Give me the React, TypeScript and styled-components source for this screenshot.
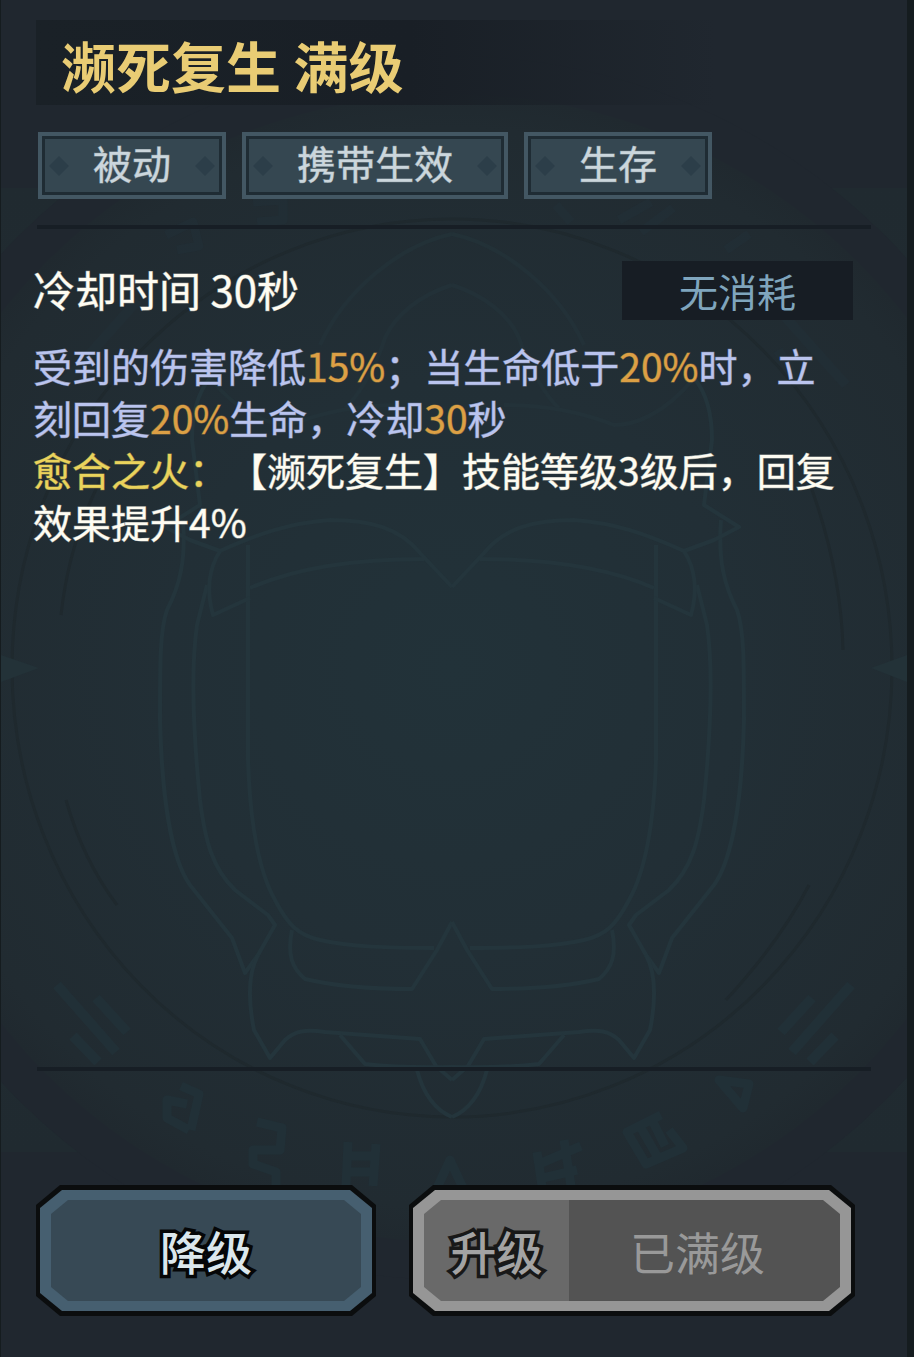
import React from "react";
import styled, { createGlobalStyle } from "styled-components";

const GlobalStyle = createGlobalStyle`
  * { box-sizing: border-box; }
  body {
    margin: 0;
    background: #151c1f;
    font-family: "Noto Sans CJK SC", "Noto Sans", sans-serif;
    text-spacing-trim: space-all;
  }
  button { font-family: inherit; }
`;

const softStroke = "1px color-mix(in srgb, currentColor 50%, transparent)";

const Panel = styled.main`
  position: relative;
  isolation: isolate;
  display: flex;
  flex-direction: column;
  min-height: 100vh;
  margin: 0 7px 0 1px;
  padding: 20px 0 41px;
  background: #20272f;
`;

const Backdrop = styled.svg`
  position: absolute;
  inset: 0;
  z-index: -1;
  width: 100%;
  height: 100%;
`;

const TitleBar = styled.header`
  margin: 0 190px 0 35px;
  padding: 3px 0 0 25px;
  background: linear-gradient(90deg, #1a2127 0%, #191f26 55%, rgba(27, 32, 40, 0) 100%);
`;

const Title = styled.h1`
  margin: 0;
  color: #e9cc74;
  font-size: 55px;
  font-weight: 700;
  line-height: 82px;
  white-space: nowrap;
`;

const TagList = styled.ul`
  display: flex;
  gap: 16px;
  margin: 27px 0 26px;
  padding: 0 37px;
  list-style: none;
`;

const Tag = styled.li`
  display: flex;
  align-items: center;
  gap: 27px;
  height: 67px;
  padding: 0 10px;
  border: 4px solid #435763;
  background: #354751;
  box-shadow: inset 0 0 0 3px #1f2c34;
  color: #cbd6dc;
  font-size: 39px;
  line-height: 55px;
  -webkit-text-stroke: ${softStroke};
  white-space: nowrap;

  &::before,
  &::after {
    content: "";
    flex: none;
    width: 14px;
    height: 14px;
    background: #2c3e49;
    transform: rotate(45deg);
  }
`;

const TagText = styled.span`
  padding-bottom: 7px;
`;

const Divider = styled.hr`
  width: auto;
  height: 4px;
  margin: 0 36px;
  border: 0;
  background: #171e25;
`;

const Details = styled.section`
  flex: 1;
  padding: 32px 54px 32px 32px;
`;

const StatRow = styled.div`
  display: flex;
  align-items: flex-start;
  justify-content: space-between;
`;

const Cooldown = styled.p`
  margin: 0;
  color: #fefcf2;
  font-size: 42px;
  line-height: 56px;
  -webkit-text-stroke: ${softStroke};
`;

const Cost = styled.p`
  width: 231px;
  margin: 0;
  background: #171d24;
  color: #7fa5bd;
  font-size: 39px;
  line-height: 59px;
  text-align: center;
`;

const Description = styled.p`
  margin: 19px 0 0;
  color: #bac4ee;
  font-size: 39px;
  line-height: 52px;
  -webkit-text-stroke: ${softStroke};
`;

type Tone = "value" | "name" | "note";
const tones: Record<Tone, string> = {
  value: "#dca045",
  name: "#ead35c",
  note: "#fefcf2",
};

const Mark = styled.span<{ $tone: Tone }>`
  color: ${(p) => tones[p.$tone]};
  -webkit-text-stroke: ${softStroke};
`;

const Actions = styled.footer`
  display: grid;
  grid-template-columns: 340fr 446fr;
  gap: 33px;
  margin-top: 114px;
  padding: 0 52px 0 35px;
`;

const cut = (x: number, y: number) =>
  `polygon(${x}px 0, calc(100% - ${x}px) 0, 100% ${y}px, 100% calc(100% - ${y}px), calc(100% - ${x}px) 100%, ${x}px 100%, 0 calc(100% - ${y}px), 0 ${y}px)`;

const ActionButton = styled.button`
  display: block;
  height: 131px;
  padding: 5px 4px;
  border: 0;
  background: #0b0d0e;
  clip-path: ${cut(24, 20)};
  font-size: 46px;
`;

const Rim = styled.span<{ $color: string }>`
  display: block;
  height: 100%;
  padding: 10px 11px;
  background: ${(p) => p.$color};
  clip-path: ${cut(22, 18)};
`;

const Face = styled.span`
  display: flex;
  height: 100%;
  clip-path: ${cut(17, 14)};
`;

const FacePart = styled.span<{ $color: string }>`
  display: flex;
  flex: 1;
  align-items: center;
  justify-content: center;
  background: ${(p) => p.$color};
`;

const FaceTag = styled(FacePart)`
  flex: 0 0 145px;
`;

const Outlined = styled.span<{ $color: string; $edge: string }>`
  padding-bottom: 2px;
  color: ${(p) => p.$color};
  font-weight: 500;
  -webkit-text-stroke: 7px ${(p) => p.$edge};
  paint-order: stroke fill;
  stroke-linejoin: round;
`;

const Status = styled.span`
  padding: 2px 14px 0 0;
  color: #999999;
  font-size: 45px;
`;

function Emblem() {
  return (
    <Backdrop viewBox="0 0 906 1357" preserveAspectRatio="xMidYMid slice" aria-hidden="true">
      <defs>
        <linearGradient id="band" x1="0" y1="0" x2="0" y2="1">
          <stop offset="0" stopColor="#202a30" />
          <stop offset="0.5" stopColor="#212d32" />
          <stop offset="1" stopColor="#202a30" />
        </linearGradient>
        <radialGradient id="disc">
          <stop offset="0" stopColor="#223239" />
          <stop offset="0.5" stopColor="#222f36" />
          <stop offset="0.94" stopColor="#212b31" />
          <stop offset="1" stopColor="#20292f" />
        </radialGradient>
        <g id="half" fill="none" stroke="#24353c" strokeWidth="4" strokeLinejoin="round">
          <path d="M183 520C186 560 180 585 167 610C160 630 160 660 160 720C162 800 172 860 190 885L232 938L245 973L258 955L275 925L268 915L235 890C212 868 205 840 200 800C192 720 192 660 197 625L207 585" />
          <path d="M248 545V760C250 820 258 870 275 900C288 925 298 935 320 940C350 947 390 948 434 948" />
          <path d="M452 922L437 950L412 989C370 989 330 985 305 979C292 968 287 955 292 930" />
          <path d="M452 587L420 553C400 528 370 520 330 520C290 523 260 533 220 551L190 540L165 527L200 505L192 440C192 410 200 390 210 378" />
          <path d="M250 588C300 566 360 559 424 559" />
          <path d="M220 551C208 570 206 590 213 615L250 598" />
          <path d="M258 955C250 970 247 995 254 1030L270 1058L285 1040C295 1031 305 1029 325 1032L420 1039L436 1066L452 1080" />
          <path d="M340 1035L365 1064Q400 1068 452 1067" />
          <path d="M417 1070C425 1100 440 1112 452 1117" />
          <g opacity="0.5">
            <path d="M452 234C400 245 345 290 320 345M452 285C420 295 395 315 385 338C375 370 355 400 345 408" />
            <path d="M210 378C240 415 270 425 290 425C320 413 355 405 400 405" />
          </g>
        </g>
        <g id="ticks" fill="none" stroke="#213037" strokeWidth="10">
          <path d="M57 985L116 1052M96 998L127 1032M73 1036L98 1062" />
          <path d="M62 385L138 300M110 385L130 350" opacity="0.5" />
        </g>
      </defs>
      <rect y="188" width="906" height="964" fill="url(#band)" />
      <circle cx="451" cy="668" r="612" fill="#20272f" />
      <circle cx="451" cy="668" r="574" fill="url(#disc)" />
      <g fill="none" stroke="#1f292e" strokeWidth="3">
        <ellipse cx="451" cy="668" rx="440" ry="449" />
        <path d="M60 615A395 400 0 0 1 110 460M65 800Q82 860 116 905M842 650Q840 560 800 460M725 1000Q780 940 808 885" />
      </g>
      <path d="M0 655L38 668L0 682ZM906 655L870 668L906 682Z" fill="#233238" />
      <g transform="translate(-1 0)">
        <use href="#half" />
        <use href="#half" transform="translate(904 0) scale(-1 1)" />
        <use href="#ticks" />
        <use href="#ticks" transform="translate(908 0) scale(-1 1)" />
      </g>
      <g fill="none" stroke="#213037" strokeWidth="9" strokeLinejoin="round">
        <path d="M180 1086L198 1094L190 1130M186 1104L166 1100V1118L188 1130" />
        <path d="M256 1122L281 1128L279 1150H252V1164L275 1172V1188" />
        <path d="M347 1142L345 1186M375 1144L372 1186M347 1156H374M346 1172H373" />
        <path d="M436 1188L449 1160L462 1188" />
        <path d="M536 1152L541 1186M563 1140L570 1186M538 1164L580 1146M542 1178L576 1170" />
        <path d="M660 1115L626 1132L645 1164L682 1148L668 1130M640 1128L656 1156M652 1122L664 1146" />
        <path d="M718 1080L748 1084L742 1108Z" />
        <g opacity="0.5">
          <path d="M165 235L192 222L198 246L176 250M252 202L282 200V220L256 222" />
          <path d="M555 205L570 222M618 220L650 202M640 232L672 208M725 250L748 234" />
        </g>
      </g>
    </Backdrop>
  );
}

const tags = ["被动", "携带生效", "生存"];

export default function App() {
  return (
    <>
      <GlobalStyle />
      <Panel>
        <Emblem />
        <TitleBar>
          <Title>濒死复生 满级</Title>
        </TitleBar>
        <TagList>
          {tags.map((tag) => (
            <Tag key={tag}>
              <TagText>{tag}</TagText>
            </Tag>
          ))}
        </TagList>
        <Divider />
        <Details>
          <StatRow>
            <Cooldown>冷却时间 30秒</Cooldown>
            <Cost>无消耗</Cost>
          </StatRow>
          <Description>
            受到的伤害降低<Mark $tone="value">15%</Mark>；当生命低于
            <Mark $tone="value">20%</Mark>时，立刻回复<Mark $tone="value">20%</Mark>
            生命，冷却<Mark $tone="value">30</Mark>秒<br />
            <Mark $tone="name">愈合之火：</Mark>
            <Mark $tone="note">【濒死复生】技能等级3级后，回复效果提升4%</Mark>
          </Description>
        </Details>
        <Divider />
        <Actions>
          <ActionButton type="button">
            <Rim $color="#465f70">
              <Face>
                <FacePart $color="#374955">
                  <Outlined $color="#dbe7ec" $edge="#050607">降级</Outlined>
                </FacePart>
              </Face>
            </Rim>
          </ActionButton>
          <ActionButton type="button" disabled>
            <Rim $color="#969696">
              <Face>
                <FaceTag $color="#696969">
                  <Outlined $color="#a3a3a3" $edge="#181818">升级</Outlined>
                </FaceTag>
                <FacePart $color="#535353">
                  <Status>已满级</Status>
                </FacePart>
              </Face>
            </Rim>
          </ActionButton>
        </Actions>
      </Panel>
    </>
  );
}
